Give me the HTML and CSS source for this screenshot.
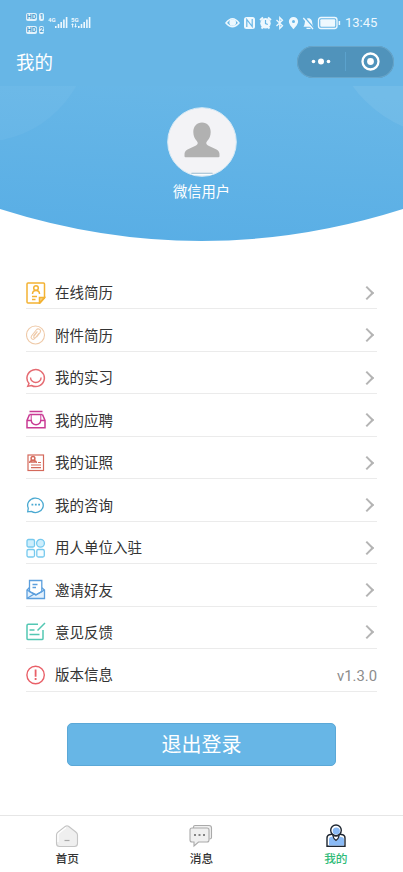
FILE: index.html
```html
<!DOCTYPE html>
<html lang="zh-CN">
<head>
<meta charset="utf-8">
<title>我的</title>
<link rel="stylesheet" href="styles.css">
</head>
<body>
<div class="app">
  <header class="top">
    <div class="status">
      <div class="sims">
        <div class="sim"><span class="hd">HD</span><span class="num">1</span></div>
        <div class="sim"><span class="hd">HD</span><span class="num">2</span></div>
      </div>
      <svg class="signals" width="44" height="16" viewBox="0 0 44 16" fill="#eef8fe">
        <text x="0" y="6.5" class="net">4G</text>
        <path d="M7 11h1.6v2H7zM9.7 9h1.6v4H9.7zM12.4 7H14v6h-1.6zM15.1 4.5h1.6V13h-1.6zM17.8 2h1.6v11h-1.6z"/>
        <text x="23" y="6.5" class="net">5G</text>
        <path d="M30 11h1.6v2H30zM32.7 9h1.6v4h-1.6zM35.4 7H37v6h-1.6zM38.1 4.5h1.6V13h-1.6zM40.8 2h1.6v11h-1.6z"/>
        <path d="M23 10l1.5-1.7L26 10h-.9v2.5h-1V10zM26.2 11h.9V8.500h1V11h.9l-1.400 1.700z"/>
      </svg>
      <svg class="indicators" width="116" height="16" viewBox="0 0 116 16" fill="none" stroke="#eef8fe" stroke-width="1.5">
        <path d="M1 8q6.500-8.500 13 0q-6.500 7.500-13 0z"/><circle cx="7.700" cy="7.500" r="2.600" fill="#eef8fe"/>
        <rect x="19" y="2" width="11" height="12" rx="2.500" fill="#eef8fe" stroke="none"/>
        <path d="M21.800 12V4.500l5.400 7V4" stroke="#67b6e6" stroke-width="1.200"/>
        <circle cx="40.500" cy="8.300" r="5.200" fill="#eef8fe" stroke="none"/><path d="M35 5l3-2.500M46 5l-3-2.500M36.500 13.500l1.500-1.500M44.500 13.500L43 12" stroke-width="1.800"/><path d="M40.500 5v3.500l2.300 1" stroke="#67b6e6" stroke-width="1.200"/>
        <path d="M51.500 5l6 5.800-2.700 2.700V2.500l2.700 2.700-6 5.800" stroke-width="1.300"/>
        <path d="M68.500 2a4.600 4.600 0 0 0-4.600 4.600c0 3.400 4.600 7.600 4.600 7.600s4.600-4.200 4.600-7.600A4.600 4.600 0 0 0 68.500 2z" fill="#eef8fe" stroke="none"/><circle cx="68.500" cy="6.500" r="1.500" fill="#67b6e6" stroke="none"/>
        <path d="M78.500 11.800c1.500-1.500 1-5.300 2-6.800 1.500-2.300 4.500-2.300 6 0 1 1.500.5 5.300 2 6.800zM81.500 12.800h4v1.200h-4z" fill="#eef8fe" stroke="none"/><path d="M79.700 2.500l9.500 11" stroke="#67b6e6" stroke-width="1.500"/><path d="M78.300 3l9.700 11" stroke-width="1.300"/>
        <rect x="93.500" y="2.500" width="18.500" height="11" rx="2.500" stroke-width="1.300"/><rect x="95.300" y="4.300" width="14.900" height="7.400" rx="1" fill="#eef8fe" stroke="none"/><path d="M114.400 6v4"/>
      </svg>
      <span class="clock">13:45</span>
    </div>
    <div class="titlebar">
      <h1>我的</h1>
      <div class="capsule">
        <svg width="97" height="32" viewBox="0 0 97 32" fill="#fff">
          <circle cx="16.500" cy="15.500" r="1.800"/><circle cx="24" cy="15.500" r="3"/><circle cx="31.500" cy="15.500" r="1.800"/>
          <path d="M48.500 6v19" stroke="#5ba2cd" stroke-width="1"/>
          <circle cx="73.500" cy="15.500" r="8" fill="none" stroke="#fff" stroke-width="2.300"/><circle cx="73.500" cy="15.500" r="3.400"/>
        </svg>
      </div>
    </div>
  </header>

  <section class="banner">
    <svg class="banner-bg" width="403" height="156" viewBox="0 0 403 156">
      <defs>
        <linearGradient id="sky" x1="0.600" y1="0" x2="0.400" y2="1"><stop offset="0" stop-color="#68b7e7"/><stop offset="1" stop-color="#59aee5"/></linearGradient>
        <clipPath id="arc"><path d="M0 0H403V123Q302 155 201.500 155T0 123z"/></clipPath>
      </defs>
      <g clip-path="url(#arc)">
        <path d="M0 0H403V156H0z" fill="url(#sky)"/>
        <circle cx="-19" cy="-53" r="109" fill="#fff" opacity=".045"/>
        <circle cx="450" cy="-70" r="120" fill="#fff" opacity=".07"/>
      </g>
    </svg>
    <div class="avatar">
      <svg width="70" height="70" viewBox="0 0 70 70">
        <circle cx="35" cy="35" r="34.300" fill="#f3f3f6" stroke="#d5e9f5" stroke-width="1"/>
        <path d="M35 15.500c-5.200 0-8.700 4-8.700 9.500 0 4 1.500 7 3.500 9 1.500 1.700 1.200 3.400-.8 4.400l-8.500 4.200c-2.300 1.200-3 2.700-3 5.400v1.300q0 1 1 1h33q1 0 1-1V48c0-2.700-.7-4.200-3-5.400L41 38.400c-2-1-2.300-2.700-.8-4.400 2-2 3.500-5 3.500-9 0-5.500-3.500-9.500-8.700-9.500z" fill="#b1b1b1"/>
        <path d="M24.500 66.300h21" stroke="#6d9dbb" stroke-width=".8"/><path d="M25 67.300h20" stroke="#fff"/>
      </svg>
    </div>
    <div class="nickname">微信用户</div>
  </section>

  <ul class="menu">
    <li><svg class="ico" viewBox="0 0 20 22" fill="none" stroke="#f3b233" stroke-width="1.500"><path d="M2 1h15.500q1 0 1 1v14l-4.500 5H2q-1 0-1-1V2q0-1 1-1z"/><path d="M18.500 15.500h-5v5.500z" fill="#f9d58c"/><circle cx="10" cy="6" r="2.300"/><path d="M6.500 12q0-3.500 3.500-3.500t3.500 3.500M6 14.500h5M6 17.500h3.500"/></svg><span>在线简历</span><i class="arrow"></i></li>
    <li><svg class="ico" viewBox="0 0 20 22" fill="none" stroke="#efcaa9" stroke-width="1.100"><circle cx="9.500" cy="11" r="9"/><path d="M12.800 9.500l-4 5c-1.800 2-4.800-.3-3.300-2.500l4.700-6c2.200-2.500 5.600.1 3.800 2.600l-3.500 4.500M11.500 7.500l-3.500 4.600c-1 1.500.7 2.600 1.700 1.400l3.200-4.100M7.500 12l3.500-4.500"/></svg><span>附件简历</span><i class="arrow"></i></li>
    <li><svg class="ico" viewBox="0 0 20 22" fill="none" stroke="#e56b72" stroke-width="1.500"><path d="M1.800 19.200l1.200-2.700a8.700 8.500 0 1 1 2.500 2z"/><path d="M4.500 10.500a5.300 5 0 0 0 10.600 0" stroke-width="1.400"/></svg><span>我的实习</span><i class="arrow"></i></li>
    <li><svg class="ico" viewBox="0 0 20 22" fill="none" stroke="#c93b94" stroke-width="1.500"><path d="M3.500 5.500L1 11.500v7.200h18v-7.200l-2.500-6M1 11.500h4.200c.8 5.500 8.800 5.500 9.600 0H19"/><path d="M3.500 2.500h13M3.500 5.500h13" stroke-width="1.300"/><path d="M5.200 6v5.500M14.800 6v5.500" stroke-width="1"/></svg><span>我的应聘</span><i class="arrow"></i></li>
    <li><svg class="ico" viewBox="0 0 20 22" fill="none" stroke="#d4695b" stroke-width="1.200"><rect x="2" y="3" width="15.500" height="15.500" stroke-width="1.200"/><circle cx="7" cy="6.500" r="1.900" stroke-width="1.500"/><path d="M3.700 11q0-2.500 3.300-2.500t3.300 2.500M6 9v2M8 9v2" stroke-width="1.500"/><path d="M12 10.500h3M5 13h10M5 15.700h10"/></svg><span>我的证照</span><i class="arrow"></i></li>
    <li><svg class="ico" viewBox="0 0 20 22" fill="none" stroke="#4aa9d1" stroke-width="1.300"><path d="M1.700 17.800l.6-3.600a7.800 7.200 0 1 1 3 3.200z"/><path d="M5.500 10.700h1.800M8.900 10.700h1.800M12.200 10.700H14" stroke-width="1.800"/></svg><span>我的咨询</span><i class="arrow"></i></li>
    <li><svg class="ico" viewBox="0 0 20 22" fill="#cdeefc" stroke="#76c9ee" stroke-width="1.300"><rect x="1" y="2.500" width="7.500" height="7.500" rx="1.500"/><circle cx="14.500" cy="6.200" r="3.900"/><rect x="1" y="12.500" width="7.500" height="7.500" rx="1.500" fill="#f4fcff"/><rect x="10.800" y="12.500" width="7.500" height="7.500" rx="1.500" fill="#f4fcff"/></svg><span>用人单位入驻</span><i class="arrow"></i></li>
    <li><svg class="ico" viewBox="0 0 20 22" fill="none" stroke="#5c9fdd" stroke-width="1.300"><path d="M3.500 8.500L1 11v8.500h17.500V11l-3-2.500" fill="#e3f1fd"/><path d="M3.500 12.500v-11h12.300v11L10 15.700z" fill="#fff"/><path d="M1 11l8.800 5 8.700-5M1.200 19.200l7-4.200M6.500 5.500h5M6.500 8.500h3.500"/></svg><span>邀请好友</span><i class="arrow"></i></li>
    <li><svg class="ico" viewBox="0 0 20 22" fill="none" stroke="#53c7b3" stroke-width="1.500"><path d="M12 3.200H2.200Q1 3.200 1 4.400v13q0 1.200 1.200 1.200h13.600q1.200 0 1.200-1.200V9M11.500 9.500l7.500-7.500M3.500 9h5M3.500 13.500h10"/></svg><span>意见反馈</span><i class="arrow"></i></li>
    <li><svg class="ico" viewBox="0 0 20 22" fill="none" stroke="#e96068" stroke-width="1.400"><circle cx="9.600" cy="11" r="8.700"/><path d="M9.600 5.500v7.200M9.600 14v2" stroke-width="1.800"/></svg><span>版本信息</span><em class="version">v1.3.0</em></li>
  </ul>

  <button class="logout">退出登录</button>

  <nav class="tabs">
    <a class="tab"><svg width="24" height="24" viewBox="0 0 24 24"><path d="M3.200 8l7.300-5.700q1.500-1.200 3 0L20.800 8q1.700 1.300 1.700 3v8.500q0 3-3 3h-15q-3 0-3-3V11q0-1.700 1.700-3z" fill="#efefef" stroke="#c4c4c4" stroke-width="1.100"/><path d="M3 18v-7q0-1.200 1-2l7-5.500" fill="none" stroke="#fff" stroke-width="1.300"/><path d="M9.500 16.500h5" stroke="#a9a9a9" stroke-width="1.200"/></svg><span>首页</span></a>
    <a class="tab"><svg width="24" height="24" viewBox="0 0 24 24" fill="#f0f0f0" stroke="#aaa" stroke-width="1.100"><path d="M4.500 4V3q0-1.500 1.500-1.500h14q2.500 0 2.500 2.500v9.500q0 1.500-2 1.500"/><path d="M3 4h15q2 0 2 2v10q0 2-2 2h-8.500L5 22v-4H3q-2 0-2-2V6q0-2 2-2z"/><path d="M5 11h2M9.500 11h2M14 11h2" stroke="#858585" stroke-width="1.800"/></svg><span>消息</span></a>
    <a class="tab active"><svg width="24" height="24" viewBox="0 0 24 24" fill="#fff" stroke="#1d2530" stroke-width="1.400"><path d="M3 22.300V14q0-2.500 2.500-3.300L9 10h6l3.500.7Q21 11.500 21 14v8.300z"/><path d="M5 21.600V15q0-1.500 1.500-2l2-.5 3.500 5 3.500-5 3.500 1q1 .5 1 2v6.100z" fill="#8abaf5" stroke="none"/><circle cx="12" cy="6.300" r="5.300"/><circle cx="12.300" cy="7" r="3.600" fill="#8abaf5" stroke="none"/><path d="M8.800 11.500q.7 3.500 3.200 5 2.500-1.500 3.200-5-3.200 1.400-6.400 0z" stroke-width="1.200"/></svg><span>我的</span></a>
  </nav>
</div>
</body>
</html>
```
FILE: styles.css
```css
* { box-sizing: border-box; }

body {
  margin: 0;
  background: #fff;
  font-family: Roboto, "Noto Sans CJK SC", sans-serif;
  color: #333;
}

.app {
  display: flex;
  flex-direction: column;
  width: 403px;
  height: 872px;
  overflow: hidden;
}

.top {
  flex: none;
  height: 86px;
  padding-top: 12px;
  background: #67b6e6;
  color: #fff;
}

.status {
  display: flex;
  align-items: center;
  height: 22px;
  padding: 0 26px;
}

.sims { display: flex; flex-direction: column; gap: 5px; margin-right: 4px; }
.sim { display: flex; gap: 2px; height: 8px; }
.hd, .num {
  height: 8px;
  border-radius: 2px;
  background: #e2f2fc;
  color: #4b9bcd;
  font-size: 7px;
  font-weight: 700;
  line-height: 8px;
  text-align: center;
}
.hd { width: 11px; }
.num { width: 5px; }

.net { font-size: 6px; font-weight: 700; }
.indicators { margin-left: auto; margin-right: 4px; }
.clock { width: 32px; font-size: 13px; line-height: 16px; color: #eef8fe; white-space: nowrap; }

.titlebar {
  display: flex;
  align-items: center;
  justify-content: space-between;
  height: 32px;
  margin-top: 12px;
  padding: 0 9px 0 16px;
}
.titlebar h1 { margin: 0; padding-top: 2px; font-size: 18.5px; font-weight: 400; line-height: 32px; }

.capsule {
  width: 97px;
  height: 32px;
  border-radius: 16px;
  background: #5093bb;
  box-shadow: inset 0 0 0 1px #68a5c9;
}
.capsule svg { display: block; }

.banner {
  position: relative;
  flex: none;
  display: flex;
  flex-direction: column;
  align-items: center;
  height: 156px;
  padding-top: 21px;
}
.banner-bg { position: absolute; inset: 0; }
.avatar { position: relative; width: 70px; height: 70px; }
.avatar svg { display: block; }
.nickname { position: relative; margin-top: 5px; font-size: 14.3px; line-height: 20px; color: #fff; }

.menu {
  flex: none;
  margin: 25px 26px 0;
  padding: 0;
  list-style: none;
}
.menu li {
  display: flex;
  align-items: center;
  height: 42.48px;
  padding-top: 10px;
  border-bottom: 1px solid #ebebeb;
  font-size: 14.5px;
  line-height: 22px;
}
.menu span { padding-top: 3px; }
.ico { width: 20px; height: 22px; margin-right: 9px; }
.arrow {
  width: 10px;
  height: 10px;
  margin-left: auto;
  margin-right: 5.5px;
  border-top: 2px solid #b4b4b4;
  border-right: 2px solid #b4b4b4;
  transform: rotate(45deg);
}
.version { margin-left: auto; padding-top: 3px; font-size: 14.8px; font-style: normal; color: #8c8c8c; }

.logout {
  flex: none;
  align-self: center;
  width: 269px;
  height: 43px;
  margin-top: 31px;
  padding: 2px 0 0;
  border: 1px solid #5ba8d7;
  border-radius: 5px;
  background: #67b6e6;
  color: #fff;
  font-family: inherit;
  font-size: 20px;
  line-height: 39px;
}

.tabs {
  display: flex;
  height: 57px;
  margin-top: auto;
  border-top: 1px solid #e6e6e6;
}
.tab {
  flex: 1;
  display: flex;
  flex-direction: column;
  align-items: center;
  padding-top: 8px;
  font-size: 11.7px;
  font-weight: 500;
  line-height: 16px;
}
.tab span { margin-top: 3px; }
.tab.active { color: #2fbb78; }
```
